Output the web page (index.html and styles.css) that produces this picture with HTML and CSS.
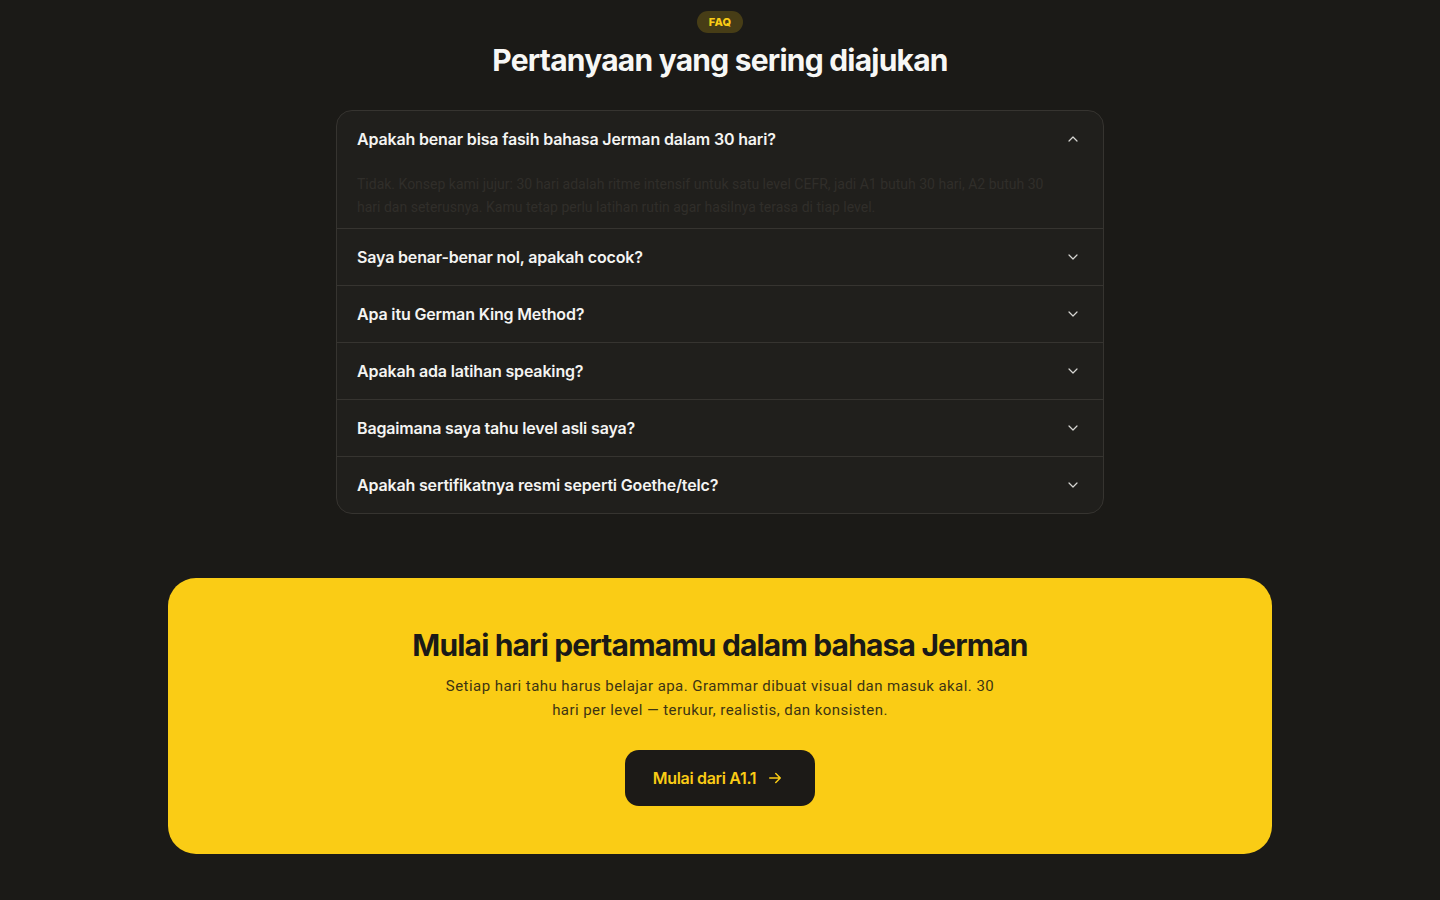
FILE: index.html
```html
<!DOCTYPE html>
<html lang="id">
<head>
<meta charset="utf-8">
<title>FAQ</title>
<link rel="stylesheet" href="styles.css">
</head>
<body>
<main class="page">
  <section class="faq">
    <span class="badge">FAQ</span>
    <h2 class="faq-title">Pertanyaan yang sering diajukan</h2>
    <div class="faq-list">
      <div class="faq-item open">
        <div class="faq-q">
          <span>Apakah benar bisa fasih bahasa Jerman dalam 30 hari?</span>
          <svg class="chev" viewBox="0 0 24 24" width="16" height="16"><path d="M6 15l6-6 6 6"/></svg>
        </div>
        <div class="faq-a">Tidak. Konsep kami jujur: 30 hari adalah ritme intensif untuk satu level CEFR, jadi A1 butuh 30 hari, A2 butuh 30 hari dan seterusnya. Kamu tetap perlu latihan rutin agar hasilnya terasa di tiap level.</div>
      </div>
      <div class="faq-item">
        <div class="faq-q">
          <span>Saya benar-benar nol, apakah cocok?</span>
          <svg class="chev" viewBox="0 0 24 24" width="16" height="16"><path d="M6 9l6 6 6-6"/></svg>
        </div>
      </div>
      <div class="faq-item">
        <div class="faq-q">
          <span>Apa itu German King Method?</span>
          <svg class="chev" viewBox="0 0 24 24" width="16" height="16"><path d="M6 9l6 6 6-6"/></svg>
        </div>
      </div>
      <div class="faq-item">
        <div class="faq-q">
          <span>Apakah ada latihan speaking?</span>
          <svg class="chev" viewBox="0 0 24 24" width="16" height="16"><path d="M6 9l6 6 6-6"/></svg>
        </div>
      </div>
      <div class="faq-item">
        <div class="faq-q">
          <span>Bagaimana saya tahu level asli saya?</span>
          <svg class="chev" viewBox="0 0 24 24" width="16" height="16"><path d="M6 9l6 6 6-6"/></svg>
        </div>
      </div>
      <div class="faq-item">
        <div class="faq-q">
          <span>Apakah sertifikatnya resmi seperti Goethe/telc?</span>
          <svg class="chev" viewBox="0 0 24 24" width="16" height="16"><path d="M6 9l6 6 6-6"/></svg>
        </div>
      </div>
    </div>
  </section>

  <section class="cta">
    <h2 class="cta-title">Mulai hari pertamamu dalam bahasa Jerman</h2>
    <p class="cta-text">Setiap hari tahu harus belajar apa. Grammar dibuat visual dan masuk akal. 30 hari per level — terukur, realistis, dan konsisten.</p>
    <a class="cta-btn" href="#">
      <span>Mulai dari A1.1</span>
      <svg viewBox="0 0 24 24" width="18" height="18"><path d="M5 12h14M13 6l6 6-6 6"/></svg>
    </a>
  </section>
</main>
</body>
</html>
```

FILE: styles.css
```css
* { box-sizing: border-box; }

html, body {
  margin: 0;
  background: #1b1a17;
}

body {
  font-family: Inter, "Noto Sans", sans-serif;
  color: #f4f4f2;
}

.page {
  padding-top: 11px;
  padding-bottom: 46px;
}

.faq {
  display: flex;
  flex-direction: column;
  align-items: center;
}

.badge {
  display: inline-flex;
  align-items: center;
  height: 22px;
  padding: 0 12px;
  border-radius: 999px;
  background: rgba(250, 204, 21, 0.2);
  color: #facc15;
  font-size: 11px;
  font-weight: 800;
  letter-spacing: 0.01em;
}

.faq-title {
  margin: 9px 0 0;
  font-size: 30px;
  line-height: 36px;
  font-weight: 700;
  letter-spacing: -0.026em;
  color: #f7f7f5;
}

.faq-list {
  margin-top: 32px;
  width: 768px;
  border: 1px solid #363430;
  border-radius: 16px;
  background: #201f1c;
  overflow: hidden;
}

.faq-item + .faq-item {
  border-top: 1px solid #363430;
}

.faq-q {
  display: flex;
  align-items: center;
  justify-content: space-between;
  padding: 16px 22px 16px 20px;
  font-size: 16px;
  line-height: 24px;
  font-weight: 600;
  letter-spacing: -0.01em;
  color: #f4f4f2;
}

.chev {
  fill: none;
  stroke: #d6d5d2;
  stroke-width: 1.8;
  stroke-linecap: round;
  stroke-linejoin: round;
}

.faq-a {
  padding: 6px 44px 9px 20px;
  font-family: Roboto, "Noto Sans", sans-serif;
  font-size: 14px;
  line-height: 23px;
  color: #302e2a;
}

.cta {
  margin: 64px auto 0;
  max-width: 1104px;
  background: #facc15;
  border-radius: 28px;
  padding: 47px 32px 48px;
  display: flex;
  flex-direction: column;
  align-items: center;
  text-align: center;
}

.cta-title {
  margin: 0;
  font-size: 30px;
  line-height: 40px;
  font-weight: 700;
  letter-spacing: -0.028em;
  color: #1b1a17;
}

.cta-text {
  margin: 9px 0 0;
  max-width: 556px;
  font-family: Roboto, "Noto Sans", sans-serif;
  font-size: 15px;
  line-height: 24px;
  letter-spacing: 0.45px;
  color: #3d3413;
}

.cta-btn {
  margin-top: 28px;
  display: inline-flex;
  align-items: center;
  gap: 10px;
  height: 56px;
  padding: 0 31px 0 28px;
  border-radius: 14px;
  background: #1c1a17;
  color: #facc15;
  text-decoration: none;
  font-size: 16px;
  font-weight: 600;
  letter-spacing: -0.02em;
}

.cta-btn svg {
  fill: none;
  stroke: #facc15;
  stroke-width: 2;
  stroke-linecap: round;
  stroke-linejoin: round;
}
```
